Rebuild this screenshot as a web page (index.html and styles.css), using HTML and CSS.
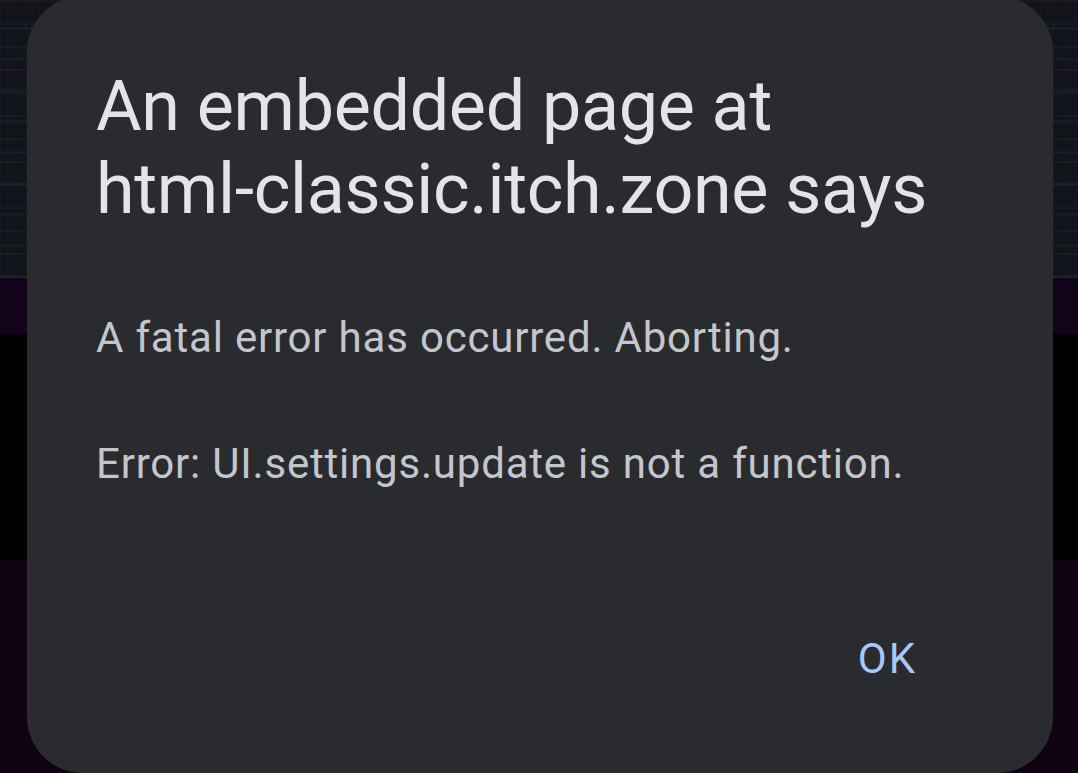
FILE: index.html
```html
<!DOCTYPE html>
<html lang="en">
<head>
    <meta charset="UTF-8">
    <meta name="viewport" content="width=device-width, initial-scale=1.0">
    <title>Alert</title>
    <link rel="stylesheet" href="styles.css">
</head>
<body>
    <!-- Page behind the dialog -->
    <div class="backdrop">
        <div class="band band-art"></div>
        <div class="band band-purple"></div>
        <div class="band band-black"></div>
        <div class="band band-purple band-fill"></div>
    </div>

    <!-- Alert dialog -->
    <div class="dialog">
        <h1 class="dialog-title">An embedded page at<br>html-classic.itch.zone says</h1>
        <p class="dialog-text">A fatal error has occurred. Aborting.</p>
        <p class="dialog-text">Error: UI.settings.update is not a function.</p>
        <div class="dialog-actions">
            <button class="dialog-button">OK</button>
        </div>
    </div>
</body>
</html>
```

FILE: styles.css
```css
body {
    margin: 0;
    padding: 0;
    width: 100vw;
    height: 100vh;
    overflow: hidden;
    background-color: #100313;
    font-family: Roboto, "Noto Sans", sans-serif;
}

.backdrop {
    display: flex;
    flex-direction: column;
    height: 100%;
}

/* Blurry game artwork at the top */
.band-art {
    height: 278px;
    background-color: #11151b;
    background-image:
        repeating-linear-gradient(0deg, rgba(120, 40, 40, 0.14) 0 2px, transparent 2px 23px),
        repeating-linear-gradient(0deg, rgba(40, 90, 110, 0.12) 0 3px, transparent 3px 31px),
        repeating-linear-gradient(90deg, rgba(255, 255, 255, 0.015) 0 1px, transparent 1px 13px);
}

.band-purple {
    height: 56px;
    background-color: #12031a;
}

.band-black {
    height: 226px;
    background-color: #000000;
}

.band-fill {
    flex: 1;
    background-color: #100313;
}

/* Dialog sits over the page */
.dialog {
    position: fixed;
    left: 27px;
    top: -4px;
    width: 1026px;
    height: 777px;
    box-sizing: border-box;
    padding: 69px 40px 0 69px;
    background-color: #2a2b2f;
    border-radius: 56px;
    display: flex;
    flex-direction: column;
}

.dialog-title {
    margin: 0 0 82px 0;
    font-size: 70px;
    font-weight: 400;
    line-height: 83px;
    letter-spacing: -0.3px;
    white-space: nowrap;
    color: #e3e3e8;
}

.dialog-text {
    margin: 0 0 76px 0;
    font-size: 42px;
    line-height: 50px;
    letter-spacing: 0.8px;
    color: #c4c6cc;
}

.dialog-text:last-of-type {
    margin-bottom: 146px;
}

.dialog-actions {
    display: flex;
    justify-content: flex-end;
    padding-right: 96px;
}

.dialog-button {
    padding: 0;
    font-family: inherit;
    font-size: 42px;
    font-weight: 400;
    line-height: 48px;
    letter-spacing: 2px;
    color: #a8c7fa;
    background: none;
    border: none;
    cursor: pointer;
}
```
